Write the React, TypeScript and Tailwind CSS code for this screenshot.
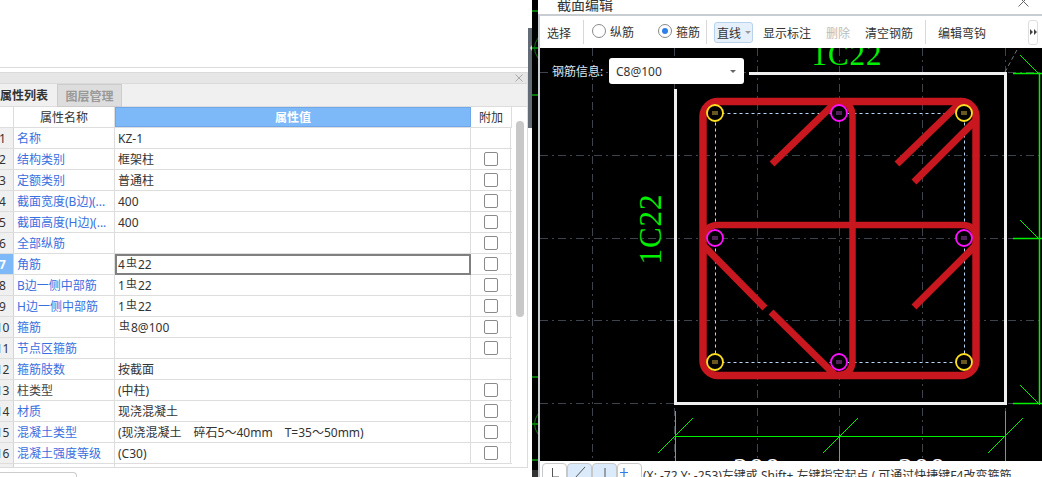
import React from "react";

const Bar = () => <span className="text-[11px] relative -top-[2px] mx-[1px]">虫</span>;

type Row = { n: number; name: React.ReactNode; value?: React.ReactNode; check: boolean; nameDark?: boolean };
const rows: Row[] = [
  { n: 1, name: "名称", value: "KZ-1", check: false },
  { n: 2, name: "结构类别", value: "框架柱", check: true },
  { n: 3, name: "定额类别", value: "普通柱", check: true },
  { n: 4, name: "截面宽度(B边)(...", value: "400", check: true },
  { n: 5, name: "截面高度(H边)(...", value: "400", check: true },
  { n: 6, name: "全部纵筋", value: "", check: true },
  { n: 7, name: "角筋", value: <>4<Bar />22</>, check: true },
  { n: 8, name: "B边一侧中部筋", value: <>1<Bar />22</>, check: true },
  { n: 9, name: "H边一侧中部筋", value: <>1<Bar />22</>, check: true },
  { n: 10, name: "箍筋", value: <><Bar />8@100</>, check: true },
  { n: 11, name: "节点区箍筋", value: "", check: true },
  { n: 12, name: "箍筋肢数", value: "按截面", check: false },
  { n: 13, name: "柱类型", value: "(中柱)", check: true, nameDark: true },
  { n: 14, name: "材质", value: "现浇混凝土", check: true },
  { n: 15, name: "混凝土类型", value: "(现浇混凝土　碎石5～40mm　T=35～50mm)", check: true },
  { n: 16, name: "混凝土强度等级", value: "(C30)", check: true },
];

function TableRow({ r }: { r: Row }) {
  const active = r.n === 7;
  return (
    <div className="flex h-[21px] border-b border-[#dddddd]">
      <div className={`w-[14px] shrink-0 overflow-hidden border-r border-[#d4d4d4] ${active ? "bg-[#7db8f8] text-white font-bold" : "bg-[#f0f0f0] text-[#333333]"}`}>
        <div className="-ml-[8px] w-[21px] text-center leading-[21px]">{r.n}</div>
      </div>
      <div className={`w-[101px] shrink-0 whitespace-nowrap overflow-hidden border-r border-[#dddddd] pl-[3px] leading-[21px] ${r.nameDark ? "text-[#444444]" : "text-[#3a6fe0]"}`}>
        {r.name}
      </div>
      {active ? (
        <div className="w-[356px] shrink-0 whitespace-nowrap overflow-hidden border-2 border-[#808080] pl-[1px] h-[21px] leading-[17px]">
          {r.value}
        </div>
      ) : (
        <div className="w-[356px] shrink-0 whitespace-nowrap overflow-hidden border-r border-[#dddddd] pl-[3px] leading-[21px]">
          {r.value}
        </div>
      )}
      <div className="w-[40px] shrink-0 border-r border-[#dddddd] flex items-center justify-center pl-[1px]">
        {r.check && <div className="w-[14px] h-[14px] rounded-[2px] border-[1.5px] border-[#8a8a8a] bg-white" />}
      </div>
    </div>
  );
}

function Left() {
  return (
    <div className="w-[528px] shrink-0 flex flex-col bg-white text-[12px] text-[#333333]">
      <div className="h-[68px] shrink-0 border-b border-[#dcdcdc]" />
      <div className="h-[4px] shrink-0" />
      <div className="flex-none h-[396px] flex flex-col border-r border-b border-[#dcdcdc] overflow-hidden">
        <div className="h-[12px] bg-[#e6e6e6] border-t border-b border-[#dadada] flex items-center justify-end pr-[4px] shrink-0">
          <svg width="8" height="8" viewBox="0 0 8 8"><path d="M0.5 0.5 7.5 7.5M7.5 0.5 0.5 7.5" stroke="#aaaaaa" strokeWidth="1" /></svg>
        </div>
        <div className="h-[23px] bg-[#f0f0f0] border-b border-[#dddddd] flex shrink-0">
          <div className="w-[56px] overflow-hidden whitespace-nowrap font-semibold text-[#333333] leading-[24px]">属性列表</div>
          <div className="w-[65px] ml-[1px] h-[23px] bg-[#dddddd] border border-[#cccccc] text-center font-semibold text-[#999999] leading-[23px]">图层管理</div>
        </div>
        <div className="flex flex-1 min-h-0">
          <div className="w-[512px] shrink-0 overflow-hidden">
            <div className="flex h-[21px] border-b border-[#dddddd]">
              <div className="w-[14px] shrink-0 border-r border-[#dddddd]" />
              <div className="w-[101px] shrink-0 border-r border-[#dddddd] text-center leading-[21px]">属性名称</div>
              <div className="w-[356px] shrink-0 bg-[#7db8f8] border border-[#6ea8ea] text-center text-white font-bold leading-[19px]">属性值</div>
              <div className="w-[41px] shrink-0 border-r border-[#dddddd] text-center leading-[21px]">附加</div>
            </div>
            {rows.map((r) => <TableRow key={r.n} r={r} />)}
            <div className="flex h-[6px]">
              <div className="w-[14px] border-r border-[#d4d4d4] bg-[#f0f0f0]" />
              <div className="w-[101px] border-r border-[#dddddd]" />
            </div>
          </div>
          <div className="w-[15px] flex justify-start pl-[4px] pt-[14px]">
            <div className="w-[8px] h-[196px] rounded-full bg-[#c8c8c8]" />
          </div>
        </div>
      </div>
      <div className="h-[4px] shrink-0" />
      <div className="w-[77px] h-[6px] shrink-0 border-t border-r border-[#cccccc] rounded-tr-[4px]" />
    </div>
  );
}

function Strip() {
  return (
    <svg width="10" height="477" viewBox="528 0 10 477" className="shrink-0 block">
      <rect x="528" y="0" width="10" height="477" fill="#000000" />
      <rect x="528" y="0" width="4" height="477" fill="#ffffff" />
      <rect x="528" y="28" width="4" height="100" fill="#636c76" />
      <path d="M530 48 532 45V51Z" fill="#dddddd" />
      <path d="M532 11H538M532 95H538M532 377H538M532 460H538M532 48H538M532 424H538" stroke="#0e9a10" strokeWidth="1.5" />
      <path d="M538 38Q531 48 538 58M538 414Q531 424 538 434" stroke="#0a7a0c" strokeWidth="1" fill="none" />
      <rect x="532" y="470" width="6" height="7" fill="#333333" />
    </svg>
  );
}

const dash = "#3c434d";
const red = "#c8171f";
const green = "#00f000";

function Canvas() {
  const yellow: [number, number][] = [[715, 113], [964, 113], [715, 362], [964, 362]];
  const pink: [number, number][] = [[839, 113], [715, 238], [964, 238], [839, 362]];
  return (
    <svg viewBox="540 48 502 413" width="502" height="413" className="block" fontFamily="'Liberation Serif', serif">
      <rect x="540" y="48" width="502" height="413" fill="#000000" />
      <g stroke={dash} strokeWidth="1" strokeDasharray="8 4 2 4">
        <path d="M540 155.5H1042M540 238.5H1042M540 320.5H1042M540 403.5H1042M540 72.5H1042" />
        <path d="M592.5 48V461M674.5 48V461M757.5 48V461M839.5 48V461M922.5 48V461M1005.5 48V461" />
      </g>
      <path d="M1005 72 1018 48" stroke="#777777" strokeWidth="1" strokeDasharray="4 3" />

      <path d="M749 73.5H1005.5V403.5H675.5V89" stroke="#f0f0f0" strokeWidth="3" fill="none" />

      <text x="847" y="65" fill={green} fontSize="31" textAnchor="middle" letterSpacing="1">1C22</text>
      <text transform="translate(661 229) rotate(-90)" fill={green} fontSize="31" textAnchor="middle" letterSpacing="1">1C22</text>
      <text x="757" y="478" fill="#ffffff" fontSize="30" textAnchor="middle" letterSpacing="1">200</text>
      <text x="922" y="478" fill="#ffffff" fontSize="30" textAnchor="middle" letterSpacing="1">200</text>

      <g stroke={green} strokeWidth="1" fill="none">
        <path d="M1013 73.5H1042M1013 238.5H1042M1013 403.5H1042M1039.5 73V403" strokeWidth="1.5" />
        <path d="M1020 55 1040 75M1020 220 1040 240M1020 385 1040 405" />
        <path d="M675 436.5H1005M675.5 411V461M839.5 434V461M1005.5 411V461" />
        <path d="M658 453 693 418M823 453 858 418M988 453 1023 418" />
      </g>

      <rect x="715.5" y="113.5" width="249" height="249" fill="none" stroke="#b8d8f8" strokeWidth="1" strokeDasharray="3 3" />

      <g stroke={red} fill="none">
        <rect x="703" y="101.5" width="273" height="274" rx="15" strokeWidth="7.5" />
        <path d="M836 101Q852.5 101 852.5 117V360Q852.5 375 838 375" strokeWidth="6.5" />
        <path d="M703 241Q703 225 719 225H962Q976 225 976 239" strokeWidth="6.5" />
      </g>
      <g stroke={red} strokeWidth="7" fill="none">
        <path d="M772 164 838 100M897 164 963 100M914 182 976 120M914 307 976 245M703 245 765 308M771 312 835 375" />
      </g>

      {yellow.map(([x, y]) => (
        <g key={`y${x}${y}`}>
          <circle cx={x} cy={y} r="8" fill="#000000" stroke="#ffe020" strokeWidth="1.8" />
          <path d={`M${x - 3} ${y - 1}H${x + 3}M${x - 3} ${y + 1}H${x + 3}`} stroke="#d0b040" strokeWidth="1" />
        </g>
      ))}
      {pink.map(([x, y]) => (
        <g key={`p${x}${y}`}>
          <circle cx={x} cy={y} r="8" fill="#000000" stroke="#ff10ff" strokeWidth="1.8" />
          <path d={`M${x - 3} ${y - 1}H${x + 3}M${x - 3} ${y + 1}H${x + 3}`} stroke="#a040b0" strokeWidth="1" />
        </g>
      ))}
    </svg>
  );
}

function Radio({ on }: { on?: boolean }) {
  return (
    <span className="w-[14px] h-[14px] rounded-full border border-[#8a8a8a] bg-white flex items-center justify-center shrink-0">
      {on && <span className="w-[6px] h-[6px] rounded-full bg-[#2f7fe8]" />}
    </span>
  );
}

const Sep = ({ cls }: { cls: string }) => <span className={`w-[1px] h-[24px] bg-[#d8d8d8] shrink-0 ${cls}`} />;

function Toolbar() {
  return (
    <div className="h-[32px] bg-white flex items-center text-[12px] text-[#333333] whitespace-nowrap shrink-0">
      <span className="ml-[7px] mt-[3px]">选择</span>
      <Sep cls="ml-[12px]" />
      <span className="ml-[8px] -mt-[2px]"><Radio /></span>
      <span className="ml-[4px] mt-[1px]">纵筋</span>
      <span className="ml-[24px] -mt-[2px]"><Radio on /></span>
      <span className="ml-[4px] mt-[1px]">箍筋</span>
      <Sep cls="ml-[6px]" />
      <span className="ml-[7px] w-[39px] h-[21px] rounded-[3px] bg-[#e6f0fb] border border-[#b8d2ee] flex items-center pl-[2px] gap-[4px] leading-[22px]">
        <span className="mt-[3px]">直线</span>
        <span className="w-0 h-0 border-l-[3px] border-r-[3px] border-t-[3px] border-l-transparent border-r-transparent border-t-[#999999]" />
      </span>
      <span className="ml-[10px] mt-[3px]">显示标注</span>
      <span className="ml-[15px] mt-[3px] text-[#bbbbbb]">删除</span>
      <span className="ml-[15px] mt-[3px]">清空钢筋</span>
      <Sep cls="ml-[12px]" />
      <span className="ml-[12px] mt-[3px]">编辑弯钩</span>
      <span className="ml-auto mr-[4px] w-[10px] h-[25px] rounded-[3px] border border-[#dddddd] flex items-center justify-center">
        <svg width="7" height="6" viewBox="0 0 7 6"><path d="M0 0 3 3 0 6ZM4 0 7 3 4 6Z" fill="#444444" /></svg>
      </span>
    </div>
  );
}

function BottomBar() {
  const btn = "w-[25px] h-[24px] border border-[#c8c8c8] rounded-t-[4px] flex items-start justify-center pt-[1px] shrink-0";
  return (
    <div className="h-[16px] bg-white flex items-start overflow-hidden pt-[2px] pl-[2px] text-[12px] text-[#333333] whitespace-nowrap shrink-0">
      <span className={btn}>
        <svg width="12" height="14" viewBox="0 0 12 14"><path d="M3.5 3V12H10" stroke="#555555" fill="none" /></svg>
      </span>
      <span className={`${btn} bg-[#dcebfb] border-[#a9c8ea]`}>
        <svg width="12" height="14" viewBox="0 0 12 14"><path d="M1 13 11 2" stroke="#555555" fill="none" /></svg>
      </span>
      <span className={`${btn} bg-[#dcebfb] border-[#a9c8ea]`}>
        <svg width="12" height="14" viewBox="0 0 12 14"><path d="M6 3V14" stroke="#555555" fill="none" /></svg>
      </span>
      <span className="w-[25px] h-[24px] border border-[#c8c8c8] rounded-t-[4px] flex items-start justify-start pt-[1px] shrink-0">
        <svg width="12" height="14" viewBox="0 0 12 14"><path d="M6 3V12M2 7.5H10" stroke="#2f7fe8" strokeWidth="1.2" fill="none" /></svg>
      </span>
      <span className="ml-[1px] mt-[6px] leading-[14px]">(X: -72 Y: -253)左键或 Shift+ 左键指定起点 ( 可通过快捷键F4改变箍筋</span>
    </div>
  );
}

function Dialog() {
  return (
    <div className="flex-1 flex flex-col min-w-0 bg-white">
      <div className="h-[14px] shrink-0 bg-white overflow-hidden flex items-end justify-between pl-[19px] pr-[13px] text-[14px] text-[#333333]">
        <span className="leading-[20px] -mb-[1px]">截面编辑</span>
        <svg width="11" height="11" viewBox="0 0 11 11" className="-translate-y-[7px]"><path d="M0.5 0.5 10.5 10.5M10.5 0.5 0.5 10.5" stroke="#666666" /></svg>
      </div>
      <div className="flex-1 min-h-0 border-l-2 border-t-2 border-[#c8cdd2] flex flex-col">
        <Toolbar />
        <div className="relative h-[413px] shrink-0 overflow-hidden">
          <Canvas />
          <div className="absolute left-[12px] top-[10px] flex items-center text-[12px]">
            <span className="text-[#dbe8f2] w-[57px] mt-[1px]">钢筋信息:</span>
            <span className="w-[135px] h-[26px] rounded-[3px] bg-white text-[#333333] flex items-center justify-between pl-[7px] pr-[8px]">
              <span className="mt-[1px]">C8@100</span>
              <span className="w-0 h-0 border-l-[3px] border-r-[3px] border-t-[3px] border-l-transparent border-r-transparent border-t-[#666666]" />
            </span>
          </div>
        </div>
        <BottomBar />
      </div>
    </div>
  );
}

export default function App() {
  return (
    <div className="w-[1042px] h-[477px] flex overflow-hidden bg-white font-['Noto_Sans','Noto_Sans_CJK_SC',sans-serif]">
      <Left />
      <Strip />
      <Dialog />
    </div>
  );
}
